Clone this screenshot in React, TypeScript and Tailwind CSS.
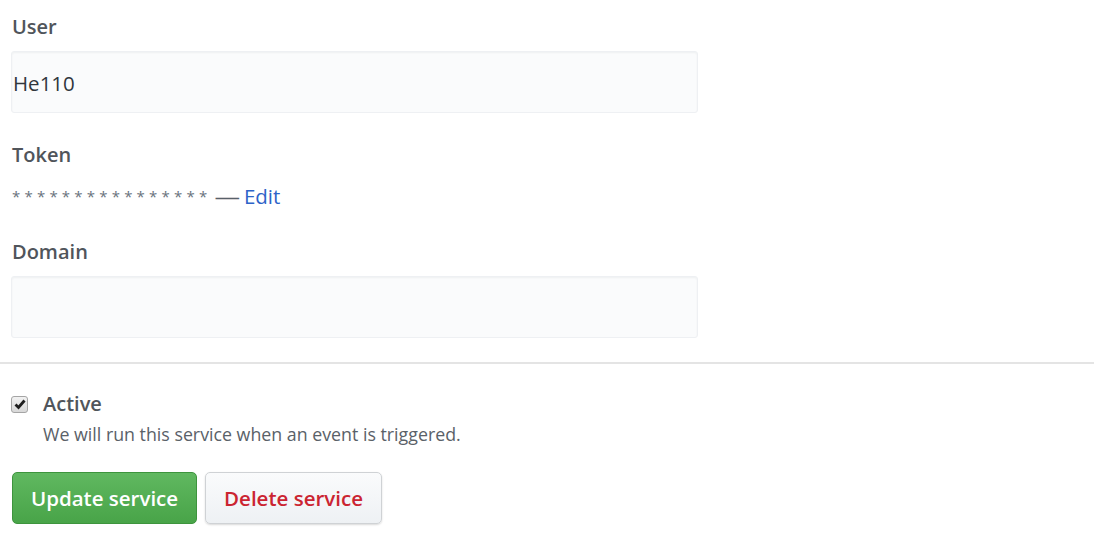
import React from "react";

function Field({ label, value }: { label: string; value?: string }) {
  return (
    <div>
      <div className="h-[28px] text-[20px] leading-[28px] font-semibold text-[#50555b]">{label}</div>
      <div className="mt-[10px] w-[687px] h-[62px] -ml-px pl-px pt-[3px] flex items-center bg-[#fafbfc] border border-[#eef0f3] rounded-[3px] shadow-[inset_0_1px_2px_rgba(27,31,35,0.05)] text-[20.5px] text-[#30363c]">
        {value}
      </div>
    </div>
  );
}

export default function App() {
  return (
    <div className="w-[1094px] min-h-screen bg-white font-['Open_Sans',sans-serif]">
      <div className="pl-3 pt-[13px]">
        <Field label="User" value="He110" />

        {/* token */}
        <div className="mt-[28px]">
          <div className="h-[28px] text-[20px] leading-[28px] font-semibold text-[#50555b]">Token</div>
          <div className="mt-[13px] h-[28px] flex items-center text-[20.5px] leading-[28px]">
            <span className="text-[#6a737d] text-[15px] tracking-[4.2px]">****************</span>
            <span className="text-[#586069] ml-[6px] scale-x-125">—</span>
            <a className="text-[#2d63c8] ml-[6px]">Edit</a>
          </div>
        </div>

        <div className="mt-[28px]">
          <Field label="Domain" />
        </div>
      </div>

      <div className="mt-[24px] h-[2px] bg-[#e4e4e4]" />

      <div className="pl-3 pt-[26px]">
        <div className="flex items-center h-[28px]">
          <div className="w-[17px] h-[17px] -ml-px rounded-[3px] border border-[#a5a5a5] bg-gradient-to-b from-[#f2f2f2] to-[#d8d8d8] flex items-center justify-center">
            <svg width="12" height="12" viewBox="0 0 12 12">
              <path d="M1.5 6.5 L4.5 9.5 L10.5 2.5" fill="none" stroke="#1e1e1e" strokeWidth="2.8" />
            </svg>
          </div>
          <span className="ml-[15px] text-[20px] font-semibold text-[#50555b]">Active</span>
        </div>
        <div className="mt-[4px] ml-[31px] h-[24px] leading-[24px] text-[17.8px] text-[#5a6168]">
          We will run this service when an event is triggered.
        </div>

        <div className="mt-[26px] flex gap-2">
          <button className="w-[185px] h-[52px] rounded-[5px] border border-[#3d943d] bg-gradient-to-b from-[#60b860] to-[#48a448] text-white text-[20.5px] font-semibold">
            Update service
          </button>
          <button className="w-[177px] h-[52px] rounded-[5px] border border-[#cfd2d5] bg-gradient-to-b from-[#fafbfc] to-[#eef1f4] text-[#cb2431] text-[20.5px] font-semibold shadow-[0_1px_2px_rgba(0,0,0,0.15)]">
            Delete service
          </button>
        </div>
      </div>
    </div>
  );
}
